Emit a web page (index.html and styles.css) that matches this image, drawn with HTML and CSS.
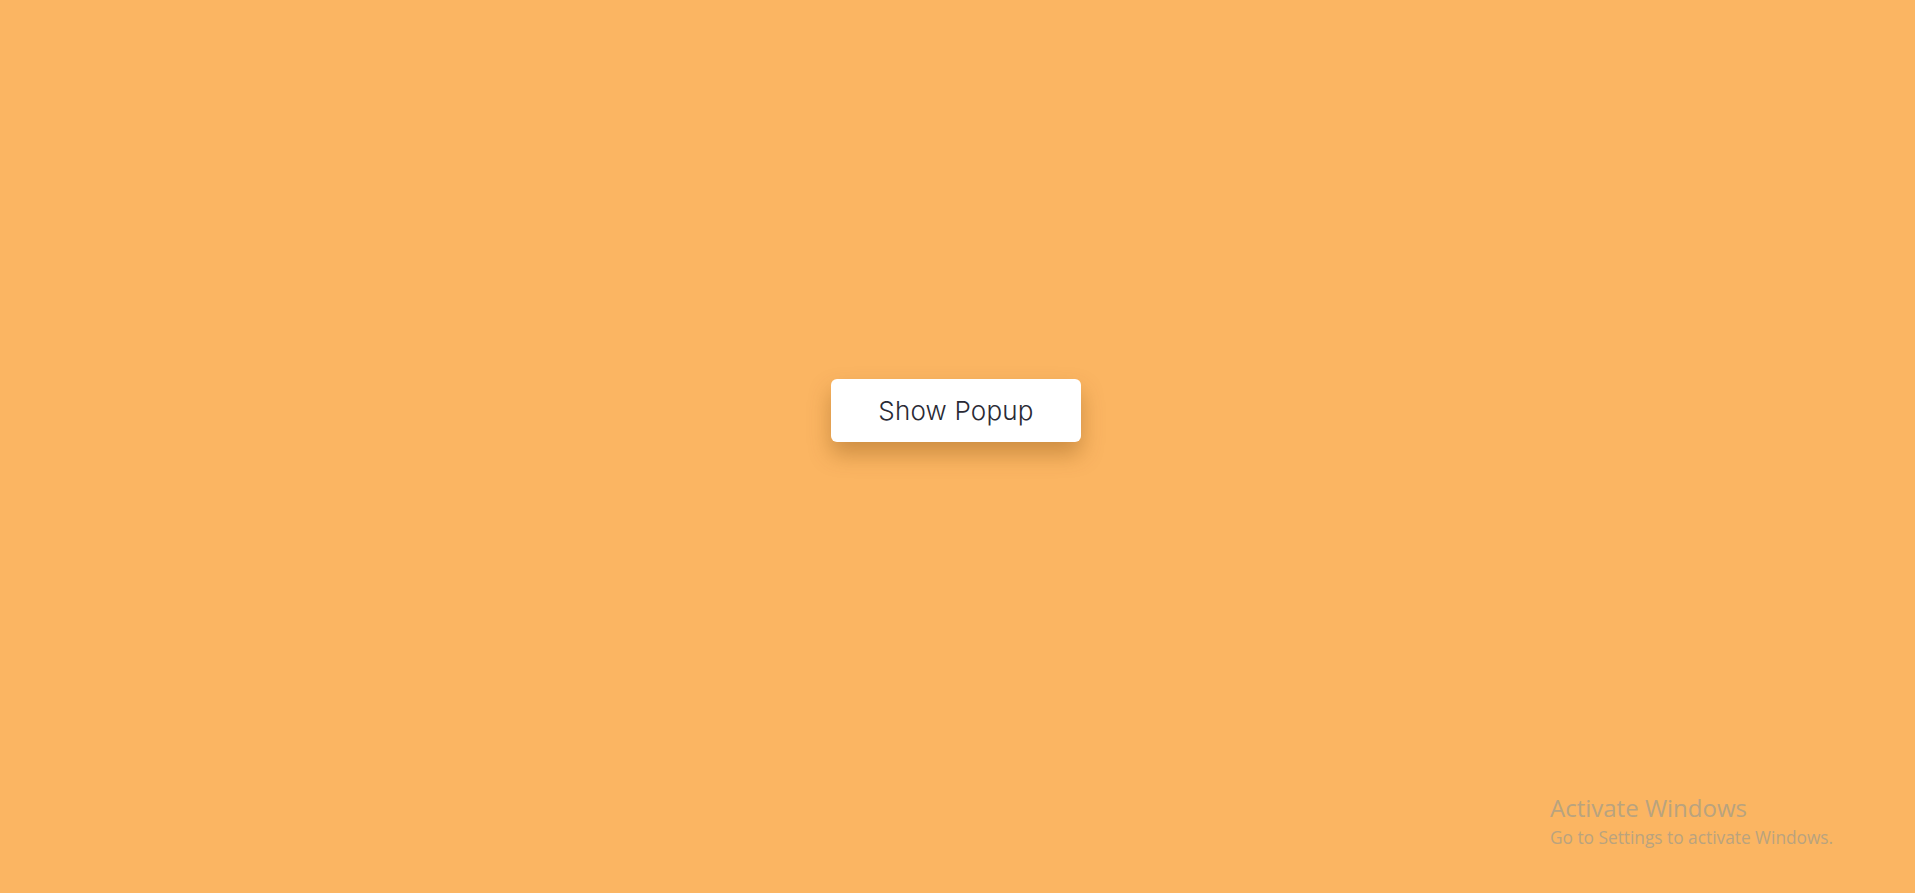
FILE: index.html
```html
<!DOCTYPE html>
<html>
<head>
<meta charset="utf-8">
<link rel="stylesheet" href="styles.css">
</head>
<body>
<main class="stage">
  <button class="show-btn">Show Popup</button>
</main>
<div class="watermark">
  <div class="wm-title">Activate Windows</div>
  <div class="wm-sub">Go to Settings to activate Windows.</div>
</div>
</body>
</html>
```
FILE: styles.css
```css
html, body {
  margin: 0;
  padding: 0;
  height: 100%;
}
body {
  background: #fbb562;
  overflow: hidden;
}
.stage {
  box-sizing: border-box;
  height: 100vh;
  display: flex;
  align-items: center;
  justify-content: center;
  padding-bottom: 72px;
  padding-right: 3px;
}
.show-btn {
  width: 250px;
  height: 63px;
  border: none;
  border-radius: 6px;
  background: #fff;
  font-family: "Inter", "Open Sans", sans-serif;
  font-weight: 300;
  font-size: 26px;
  letter-spacing: 0.2px;
  color: #2a2a35;
  box-shadow: 0 12px 22px rgba(120, 70, 10, 0.35);
  cursor: pointer;
  padding: 0;
}
.watermark {
  position: absolute;
  left: 1550px;
  top: 792px;
  font-family: "Open Sans", "Noto Sans", sans-serif;
  color: #b9a37f;
}
.wm-title {
  font-size: 24px;
  line-height: 31px;
}
.wm-sub {
  font-size: 17.3px;
  line-height: 24px;
  margin-top: 3px;
}
```
